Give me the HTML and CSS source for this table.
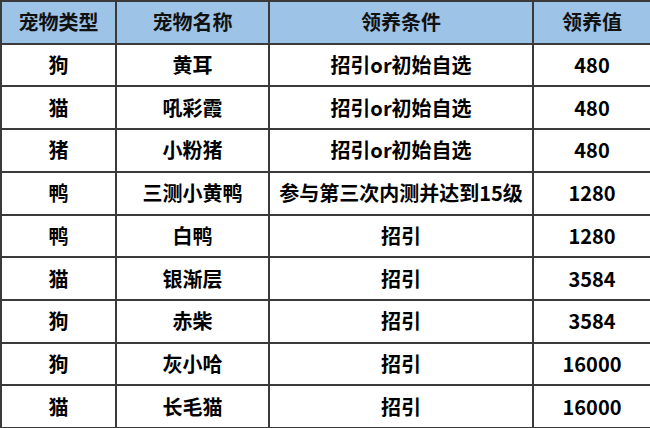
FILE: index.html
```html
<!DOCTYPE html>
<html lang="zh">
<head>
<meta charset="utf-8">
<link rel="stylesheet" href="styles.css">
</head>
<body>
<div class="table">
  <div class="cell head">宠物类型</div><div class="cell head">宠物名称</div><div class="cell head">领养条件</div><div class="cell head">领养值</div>
  <div class="cell">狗</div><div class="cell">黄耳</div><div class="cell">招引or初始自选</div><div class="cell">480</div>
  <div class="cell">猫</div><div class="cell">吼彩霞</div><div class="cell">招引or初始自选</div><div class="cell">480</div>
  <div class="cell">猪</div><div class="cell">小粉猪</div><div class="cell">招引or初始自选</div><div class="cell">480</div>
  <div class="cell">鸭</div><div class="cell">三测小黄鸭</div><div class="cell">参与第三次内测并达到15级</div><div class="cell">1280</div>
  <div class="cell">鸭</div><div class="cell">白鸭</div><div class="cell">招引</div><div class="cell">1280</div>
  <div class="cell">猫</div><div class="cell">银渐层</div><div class="cell">招引</div><div class="cell">3584</div>
  <div class="cell">狗</div><div class="cell">赤柴</div><div class="cell">招引</div><div class="cell">3584</div>
  <div class="cell">狗</div><div class="cell">灰小哈</div><div class="cell">招引</div><div class="cell">16000</div>
  <div class="cell">猫</div><div class="cell">长毛猫</div><div class="cell">招引</div><div class="cell">16000</div>
</div>
</body>
</html>
```
FILE: styles.css
```css
html, body {
  margin: 0;
  padding: 0;
  background: #ffffff;
  overflow: hidden;
}
.table {
  width: 652px;
  height: 429px;
  box-sizing: border-box;
  display: grid;
  grid-template-columns: 115px 153px 264px 1fr;
  grid-template-rows: repeat(10, 1fr);
  border-left: 2px solid #3a3a3a;
  border-top: 2px solid #3a3a3a;
  font-family: "Noto Sans CJK SC", "Noto Sans", sans-serif;
  font-weight: 700;
  font-size: 20px;
  color: #000000;
}
.cell {
  box-sizing: border-box;
  border-right: 2px solid #3a3a3a;
  border-bottom: 2px solid #3a3a3a;
  display: flex;
  align-items: center;
  justify-content: center;
  white-space: nowrap;
  line-height: 1;
}
.head {
  background: #9dc3e6;
  color: #111111;
}
```
